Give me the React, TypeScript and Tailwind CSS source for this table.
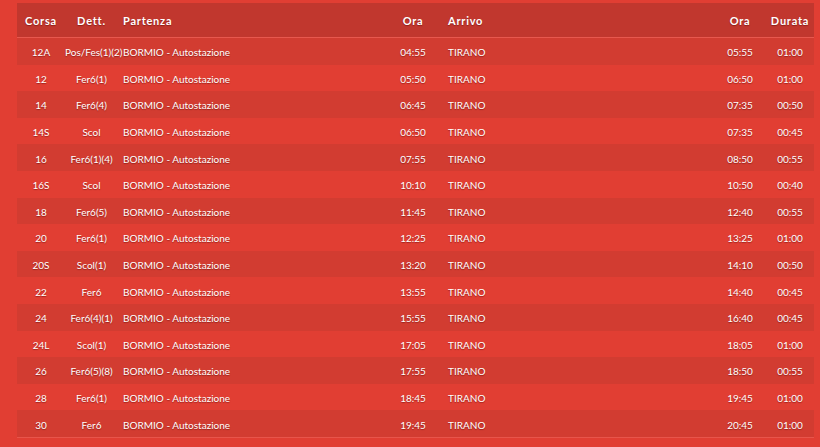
import React from 'react';

type Corsa = { id: string; dett: string; dep: string; arr: string; dur: string };

const corse: Corsa[] = [
    { id: '12A', dett: 'Pos/Fes(1)(2)', dep: '04:55', arr: '05:55', dur: '01:00' },
    { id: '12', dett: 'Fer6(1)', dep: '05:50', arr: '06:50', dur: '01:00' },
    { id: '14', dett: 'Fer6(4)', dep: '06:45', arr: '07:35', dur: '00:50' },
    { id: '14S', dett: 'Scol', dep: '06:50', arr: '07:35', dur: '00:45' },
    { id: '16', dett: 'Fer6(1)(4)', dep: '07:55', arr: '08:50', dur: '00:55' },
    { id: '16S', dett: 'Scol', dep: '10:10', arr: '10:50', dur: '00:40' },
    { id: '18', dett: 'Fer6(5)', dep: '11:45', arr: '12:40', dur: '00:55' },
    { id: '20', dett: 'Fer6(1)', dep: '12:25', arr: '13:25', dur: '01:00' },
    { id: '20S', dett: 'Scol(1)', dep: '13:20', arr: '14:10', dur: '00:50' },
    { id: '22', dett: 'Fer6', dep: '13:55', arr: '14:40', dur: '00:45' },
    { id: '24', dett: 'Fer6(4)(1)', dep: '15:55', arr: '16:40', dur: '00:45' },
    { id: '24L', dett: 'Scol(1)', dep: '17:05', arr: '18:05', dur: '01:00' },
    { id: '26', dett: 'Fer6(5)(8)', dep: '17:55', arr: '18:50', dur: '00:55' },
    { id: '28', dett: 'Fer6(1)', dep: '18:45', arr: '19:45', dur: '01:00' },
    { id: '30', dett: 'Fer6', dep: '19:45', arr: '20:45', dur: '01:00' },
];

const cols = 'grid grid-cols-[48px_53px_272px_46px_278px_52px_48px] items-center';

export default function App() {
    return (
        <div className="w-[820px] h-[447px] overflow-hidden bg-[#e13e33] pt-[3px] pl-[17px] font-['Lato','Liberation_Sans',sans-serif] text-white [text-shadow:0_1px_1px_rgba(80,0,0,0.45)]">
            <div className="w-[797px]">
                {/* header */}
                <div className={`${cols} h-[35px] pt-[2px] bg-[#c1372e] border-b border-[#e8584e] text-[11px] font-bold tracking-[0.07em]`}>
                    <div className="text-center">Corsa</div>
                    <div className="text-center">Dett.</div>
                    <div className="pl-[5px]">Partenza</div>
                    <div className="text-center">Ora</div>
                    <div className="pl-[12px]">Arrivo</div>
                    <div className="text-center">Ora</div>
                    <div className="text-center">Durata</div>
                </div>
                {corse.map((c, i) => (
                    <div
                        key={c.id}
                        className={`${cols} h-[26.6px] pt-[3px] text-[10px] ${i % 2 === 0 ? 'bg-[#d23c31]' : 'bg-[#e13e33]'}`}
                    >
                        <div className="text-center">{c.id}</div>
                        <div className="text-center whitespace-nowrap">{c.dett}</div>
                        <div className="pl-[5px]">BORMIO - Autostazione</div>
                        <div className="text-center">{c.dep}</div>
                        <div className="pl-[12px]">TIRANO</div>
                        <div className="text-center">{c.arr}</div>
                        <div className="text-center">{c.dur}</div>
                    </div>
                ))}
                <div className="h-px bg-[#e8554b]" />
            </div>
        </div>
    );
}
